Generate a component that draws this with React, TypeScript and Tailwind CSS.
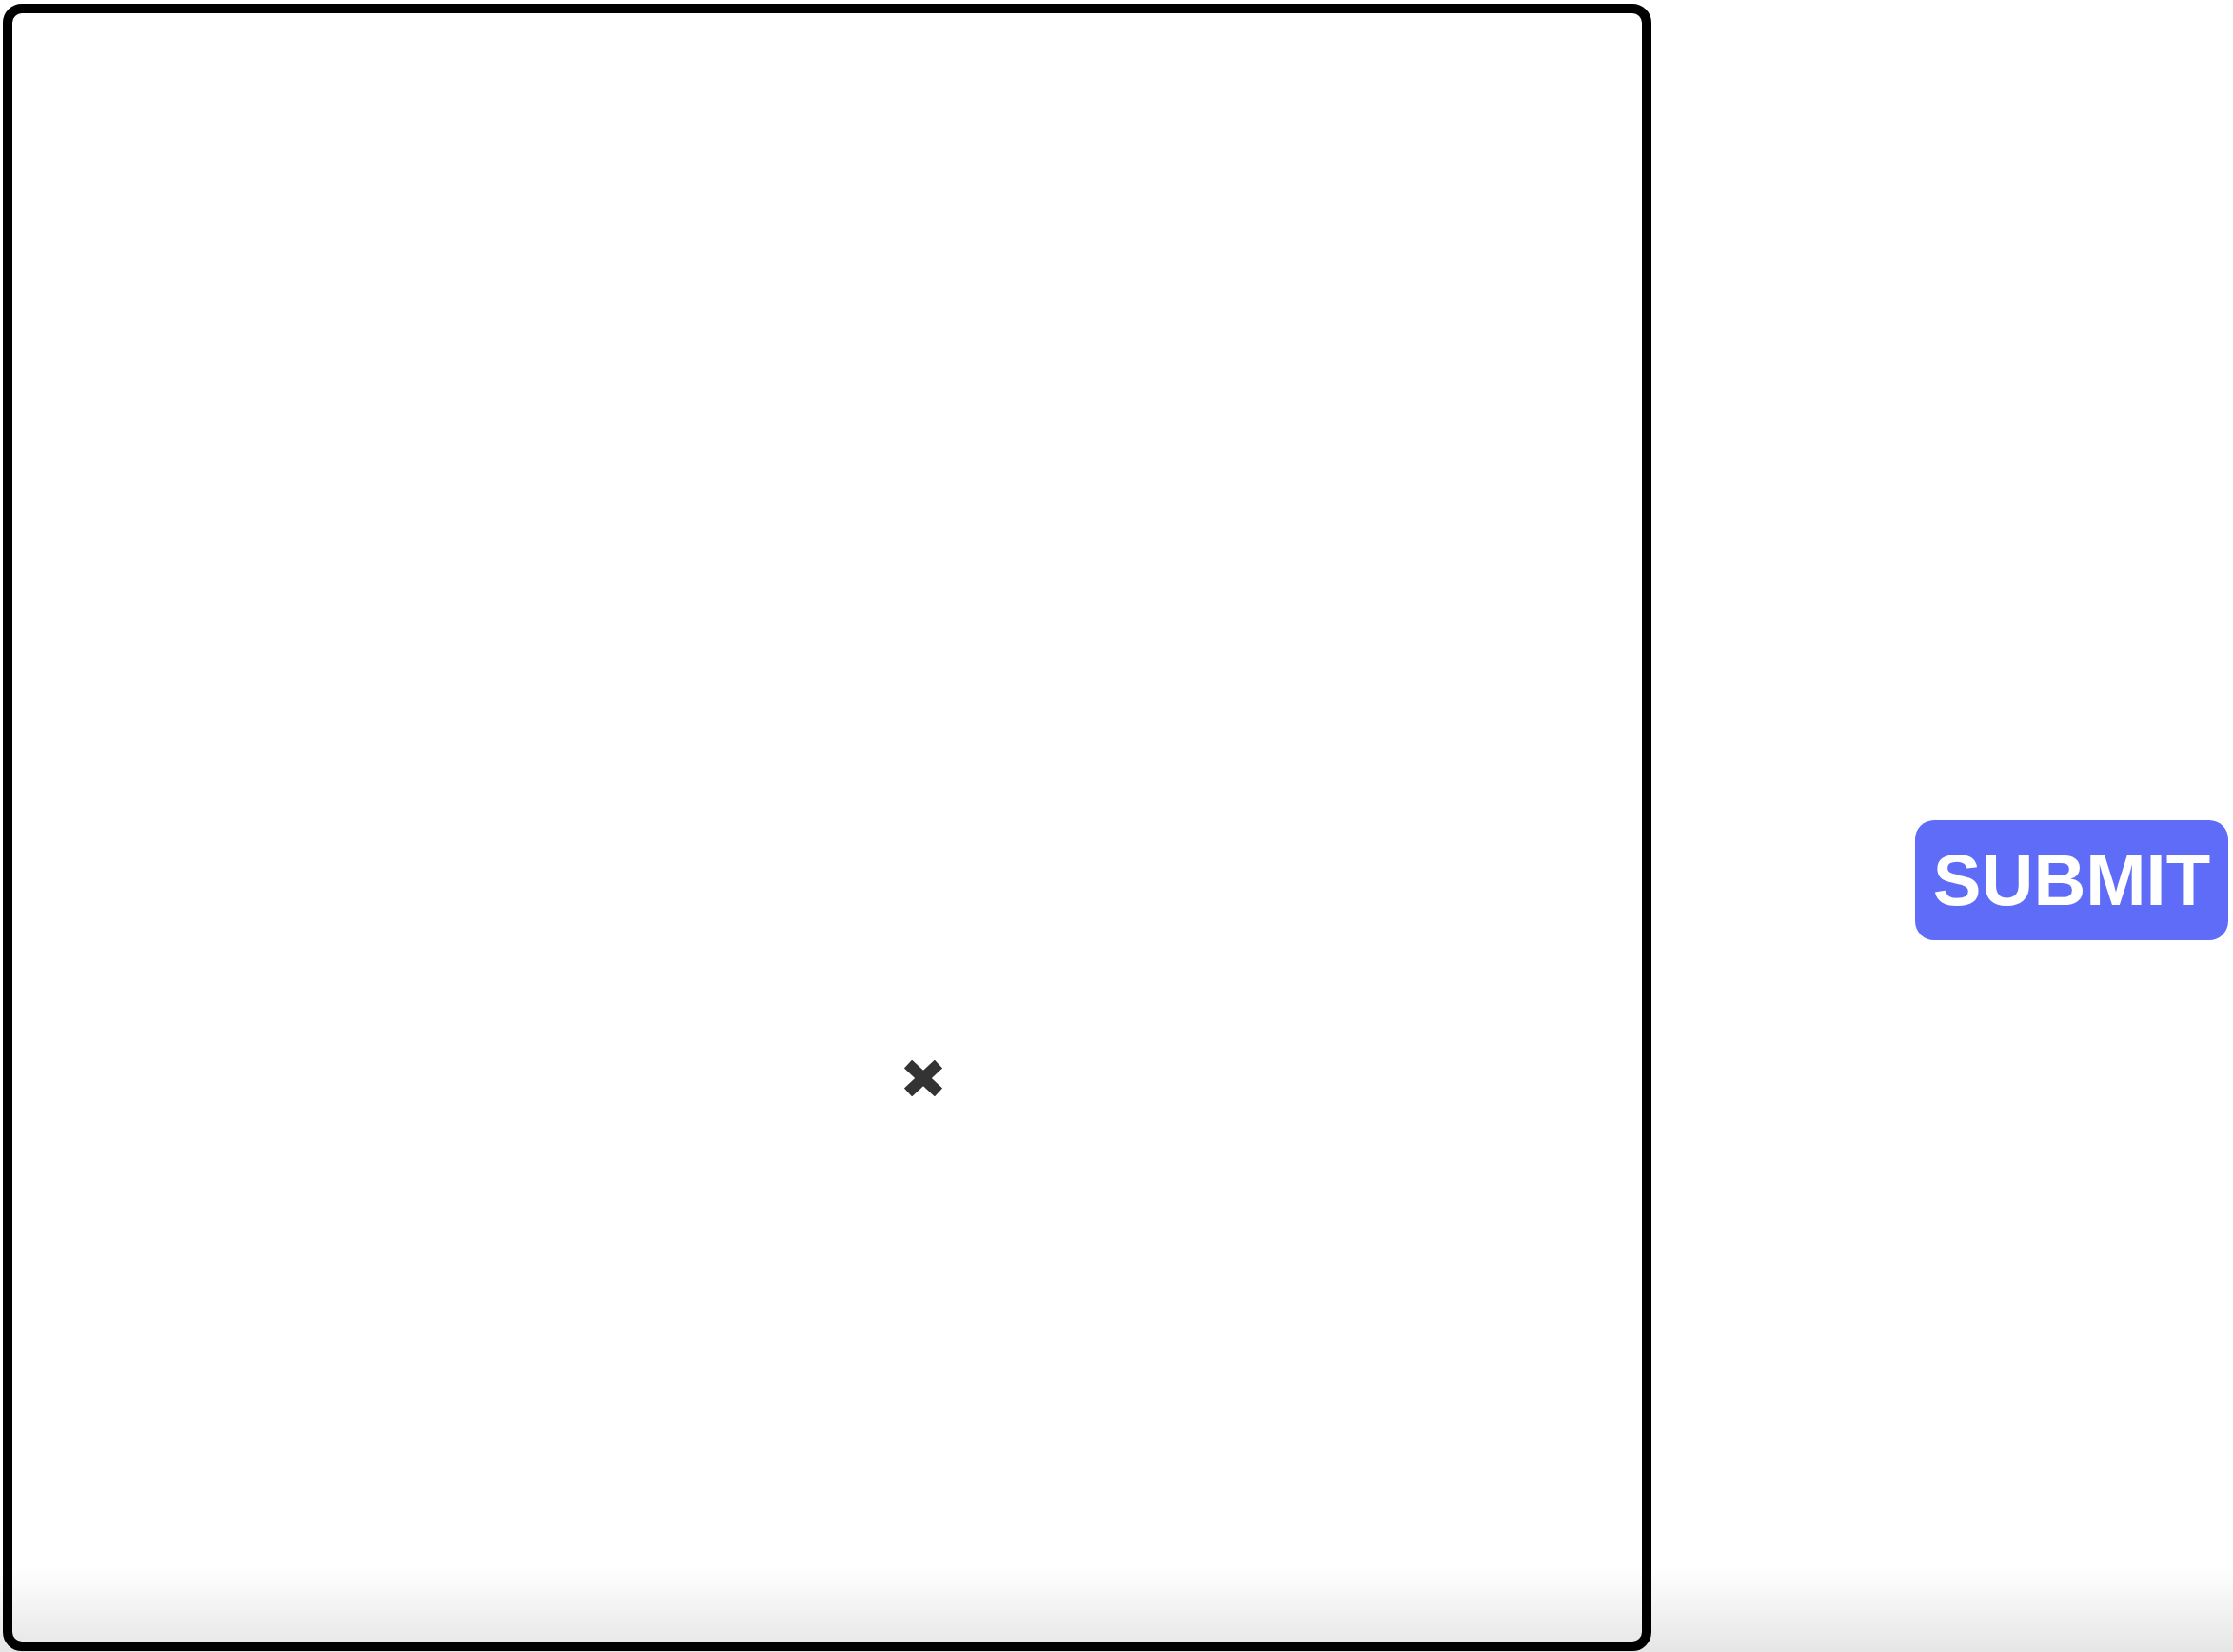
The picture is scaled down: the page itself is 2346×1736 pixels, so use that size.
export default function App() {
  return (
    <div className="relative w-[2346px] h-[1736px] overflow-hidden bg-white font-['Liberation_Sans',Arial,sans-serif]">
      <div className="flex items-start">
        {/* Drawing board */}
        <div className="relative ml-[3px] mt-[4px] w-[1732px] h-[1731px] shrink-0 rounded-[20px] border-[10px] border-black bg-white">
          <svg
            className="absolute left-[936px] top-[1100px] blur-[0.6px]"
            width="42"
            height="38"
            viewBox="0 0 42 38"
          >
            <g stroke="#333" strokeWidth="12" strokeLinecap="butt">
              <line x1="5" y1="4" x2="37" y2="34" />
              <line x1="37" y1="4" x2="5" y2="34" />
            </g>
          </svg>
        </div>

        <button className="ml-[277px] mt-[862px] h-[126px] w-[329px] shrink-0 rounded-[20px] bg-[#5f6cf7] text-[76px] font-bold leading-none text-white">
          SUBMIT
        </button>
      </div>

      {/* bottom shade */}
      <div className="pointer-events-none absolute inset-x-0 bottom-0 h-[90px] bg-linear-to-b from-transparent to-black/10" />
    </div>
  );
}
